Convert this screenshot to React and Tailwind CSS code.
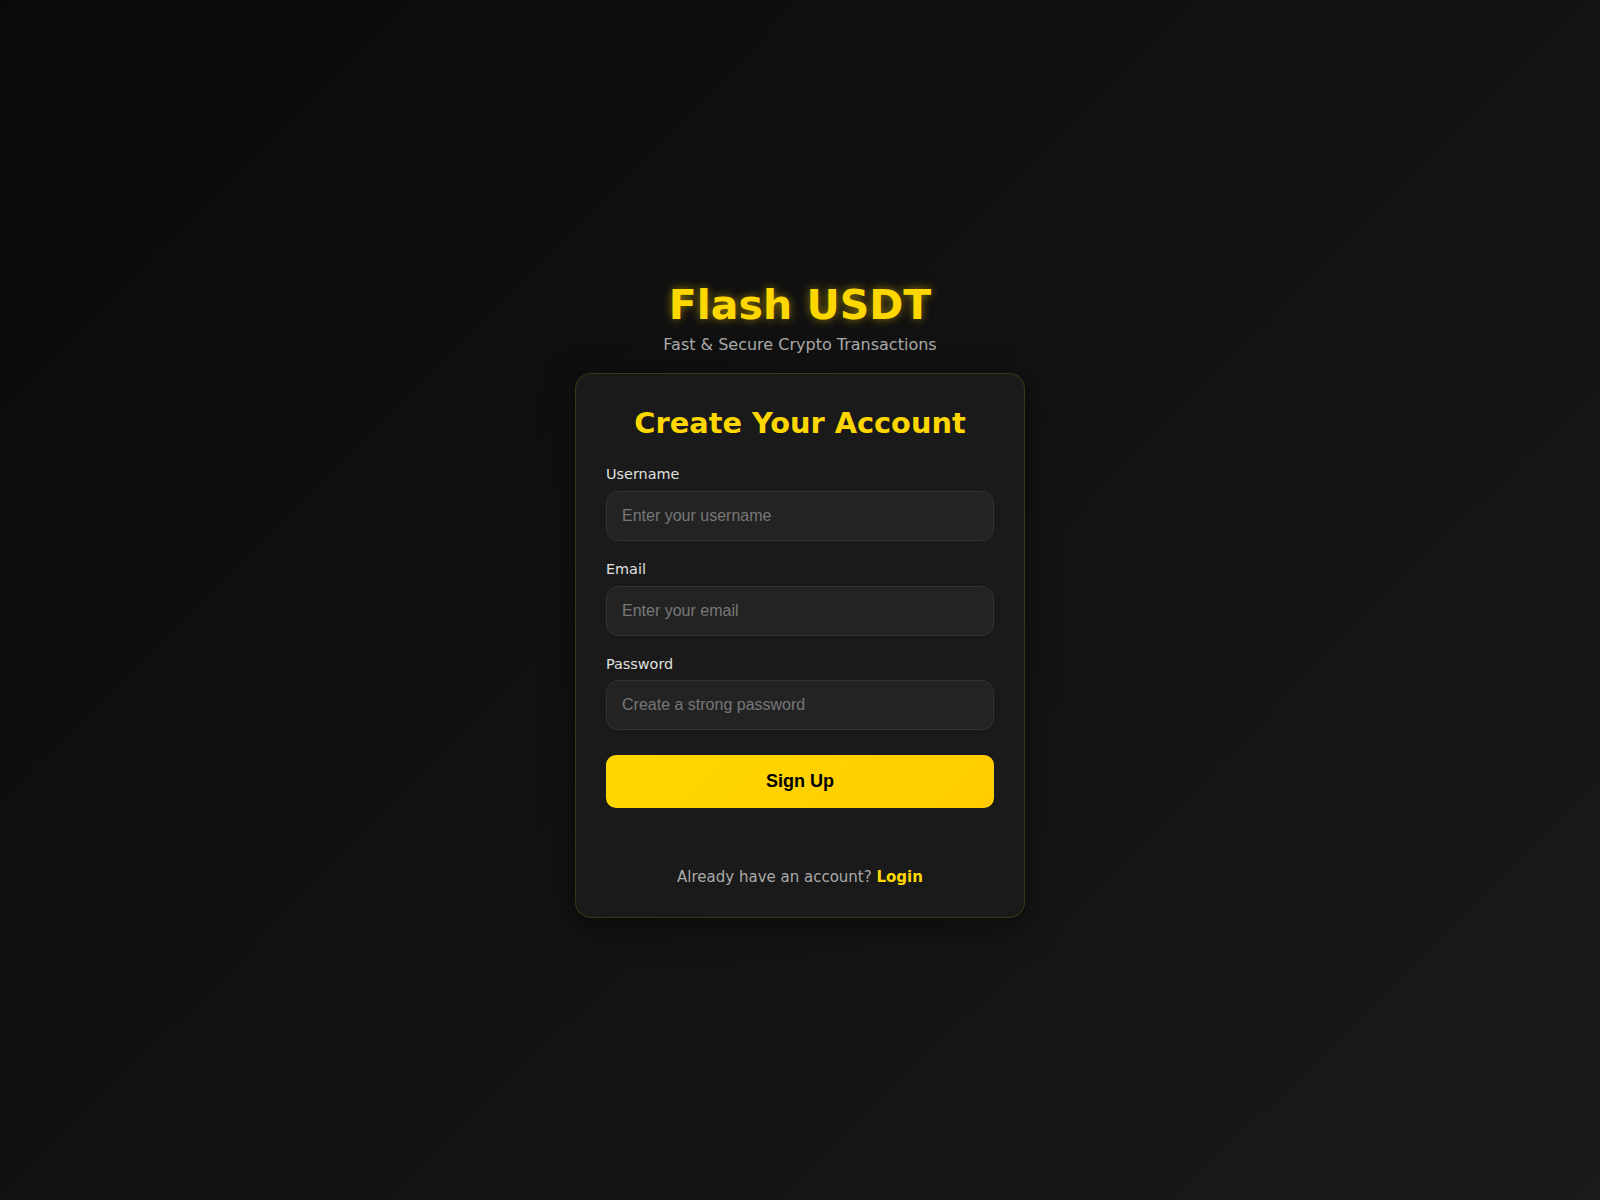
export default function App() {
  return (
    <main className="min-h-screen flex items-center justify-center bg-[linear-gradient(135deg,#0a0a0a,#1a1a1a)] font-['DejaVu_Sans',Verdana,sans-serif]">
      <div className="w-[450px] flex flex-col">
        <header className="text-center mb-[18px]">
          <h1 className="text-[41px] leading-[1.164] font-bold text-[#ffd700] mb-[6px] [text-shadow:0_0_10px_rgba(255,215,0,0.5)]">
            Flash USDT
          </h1>
          <p className="text-base leading-[1.164] text-[#aaaaaa]">Fast &amp; Secure Crypto Transactions</p>
        </header>

        <section className="bg-[#1a1a1a] border border-[rgba(255,215,0,0.15)] rounded-2xl px-[30px] pt-[33px] pb-[30px] shadow-[0_8px_32px_rgba(0,0,0,0.5)]">
          <h2 className="text-[28.8px] leading-[1.164] font-bold text-[#ffd700] text-center mb-[26px]">
            Create Your Account
          </h2>

          <form onSubmit={(e) => e.preventDefault()}>
            <Field label="Username" type="text" placeholder="Enter your username" />
            <Field label="Email" type="email" placeholder="Enter your email" />
            <Field label="Password" type="password" placeholder="Create a strong password" />

            <button
              type="submit"
              className="w-full mt-[5px] py-4 rounded-[10px] bg-[linear-gradient(135deg,#ffd700,#ffcc00)] text-black text-lg leading-[normal] font-bold font-['Liberation_Sans',Arial,sans-serif]"
            >
              Sign Up
            </button>
          </form>

          <p className="mt-[61px] text-center text-[15px] leading-[1.164] text-[#aaaaaa]">
            Already have an account?{" "}
            <a href="#" className="text-[#ffd700] font-bold">
              Login
            </a>
          </p>
        </section>
      </div>
    </main>
  );
}

function Field({ label, type, placeholder }) {
  return (
    <div className="mb-5">
      <label className="block text-[14.4px] leading-[1.164] text-[#e0e0e0] mb-2">{label}</label>
      <input
        type={type}
        placeholder={placeholder}
        className="w-full px-[15px] py-[15px] bg-[#232323] border border-[#333333] rounded-xl text-base leading-[normal] text-white placeholder:text-[#777777] font-['Liberation_Sans',Arial,sans-serif] outline-none"
      />
    </div>
  );
}
